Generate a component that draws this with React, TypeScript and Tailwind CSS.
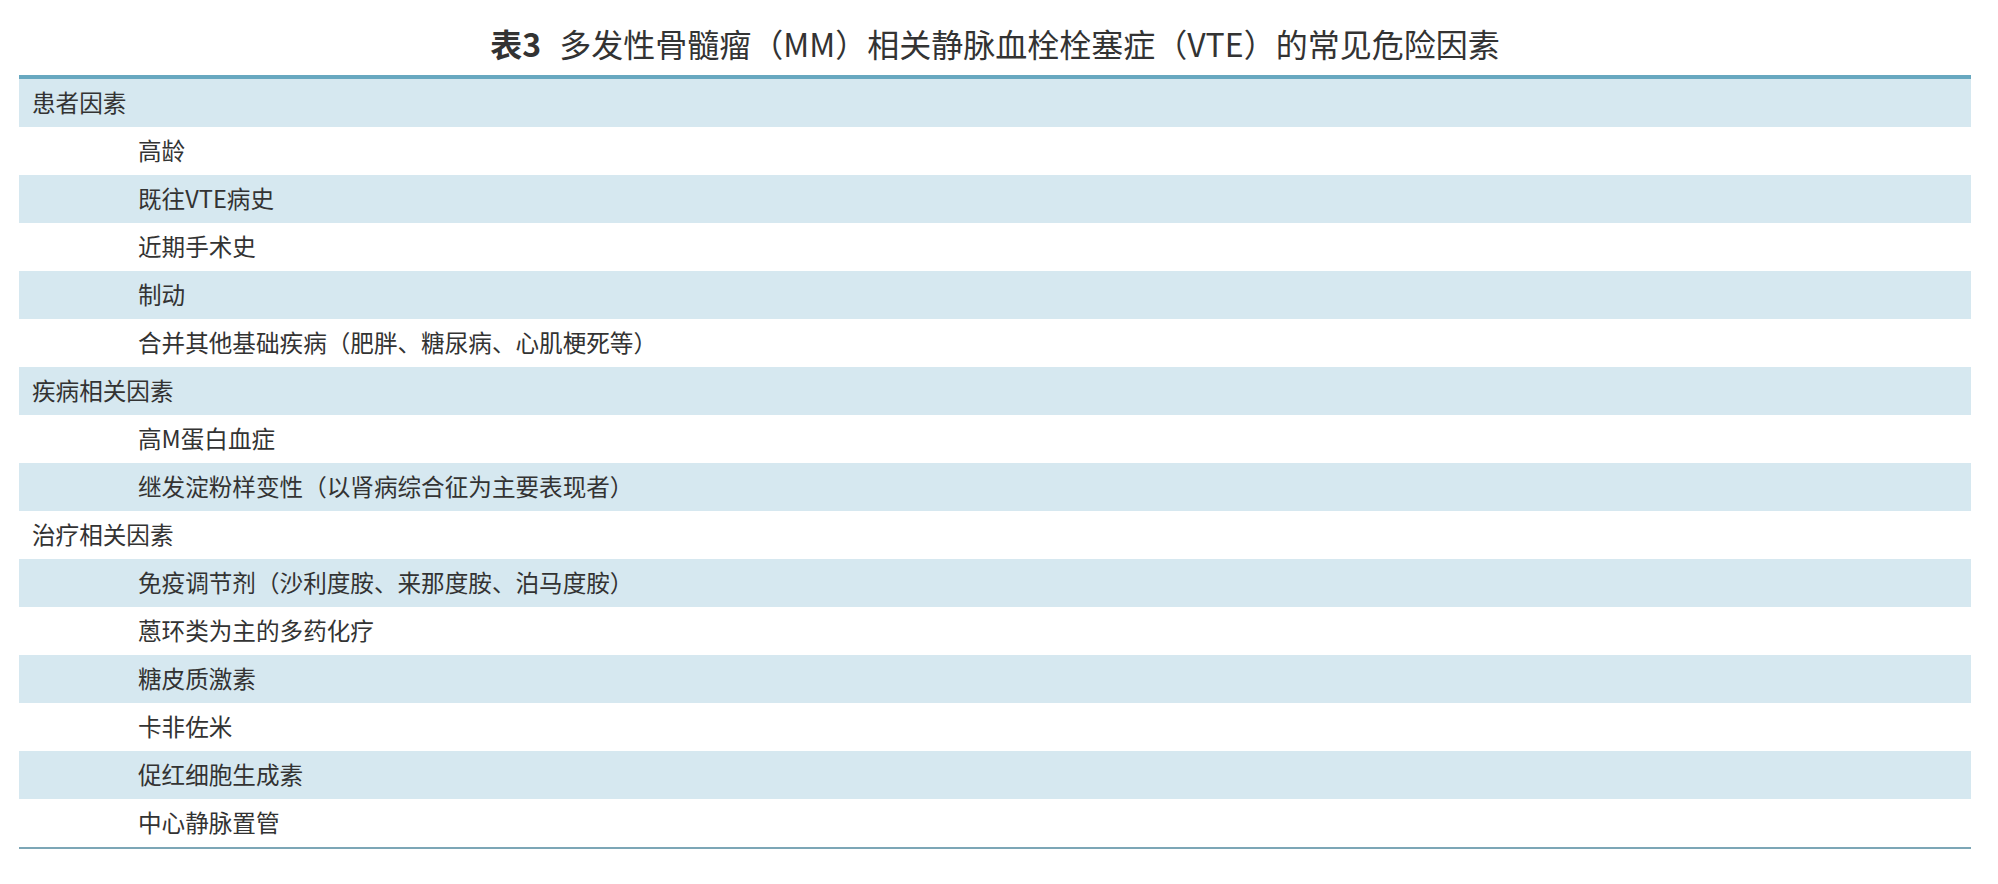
import React from 'react';

type Row = { text: string; level: 0 | 1 };

const rows: Row[] = [
  { text: '患者因素', level: 0 },
  { text: '高龄', level: 1 },
  { text: '既往VTE病史', level: 1 },
  { text: '近期手术史', level: 1 },
  { text: '制动', level: 1 },
  { text: '合并其他基础疾病（肥胖、糖尿病、心肌梗死等）', level: 1 },
  { text: '疾病相关因素', level: 0 },
  { text: '高M蛋白血症', level: 1 },
  { text: '继发淀粉样变性（以肾病综合征为主要表现者）', level: 1 },
  { text: '治疗相关因素', level: 0 },
  { text: '免疫调节剂（沙利度胺、来那度胺、泊马度胺）', level: 1 },
  { text: '蒽环类为主的多药化疗', level: 1 },
  { text: '糖皮质激素', level: 1 },
  { text: '卡非佐米', level: 1 },
  { text: '促红细胞生成素', level: 1 },
  { text: '中心静脉置管', level: 1 },
];

export default function App() {
  return (
    <div className="min-h-screen bg-white pl-[19px] pr-[27px] font-['Noto_Sans_CJK_SC','Noto_Sans',sans-serif] text-[#333]">
      {/* Title */}
      <h1 className="flex h-[75px] items-center justify-center pt-[10px] text-[32px] leading-none">
        <span className="mr-[18px] font-bold">表3</span>
        <span>多发性骨髓瘤（MM）相关静脉血栓栓塞症（VTE）的常见危险因素</span>
      </h1>

      {/* Table */}
      <div className="border-t-4 border-b-2 border-t-[#68a8c0] border-b-[#7ca6b6]">
        {rows.map((row, idx) => (
          <div
            key={idx}
            className={`flex h-12 items-center pb-[1px] text-[23.6px] leading-none ${
              idx % 2 === 0 ? 'bg-[#d6e8f0]' : 'bg-white'
            } ${row.level === 0 ? 'pl-[13px]' : 'pl-[119px]'}`}
          >
            {row.text}
          </div>
        ))}
      </div>
    </div>
  );
}
